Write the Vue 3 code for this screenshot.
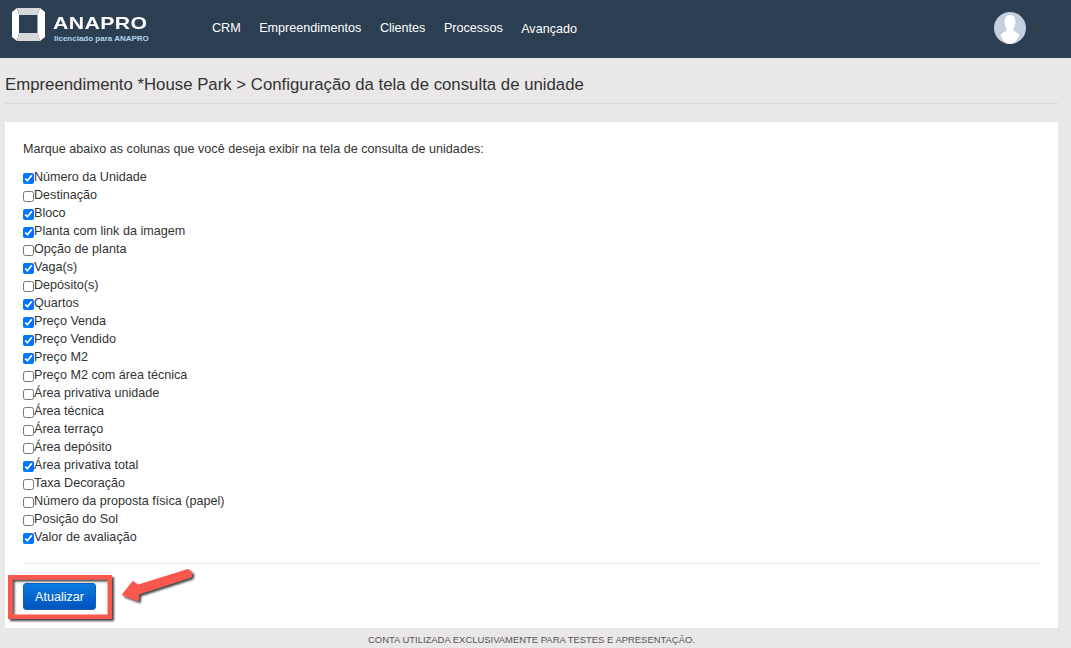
<script setup>
const menu = ['CRM', 'Empreendimentos', 'Clientes', 'Processos', 'Avançado']

const columns = [
  { label: 'Número da Unidade', checked: true },
  { label: 'Destinação', checked: false },
  { label: 'Bloco', checked: true },
  { label: 'Planta com link da imagem', checked: true },
  { label: 'Opção de planta', checked: false },
  { label: 'Vaga(s)', checked: true },
  { label: 'Depósito(s)', checked: false },
  { label: 'Quartos', checked: true },
  { label: 'Preço Venda', checked: true },
  { label: 'Preço Vendido', checked: true },
  { label: 'Preço M2', checked: true },
  { label: 'Preço M2 com área técnica', checked: false },
  { label: 'Área privativa unidade', checked: false },
  { label: 'Área técnica', checked: false },
  { label: 'Área terraço', checked: false },
  { label: 'Área depósito', checked: false },
  { label: 'Área privativa total', checked: true },
  { label: 'Taxa Decoração', checked: false },
  { label: 'Número da proposta física (papel)', checked: false },
  { label: 'Posição do Sol', checked: false },
  { label: 'Valor de avaliação', checked: true }
]
</script>

<template>
  <div class="page">
    <header class="topbar">
      <div class="brand">
        <svg class="brand-mark" width="34" height="34" viewBox="0 0 34 34">
          <path d="M5 0 7 7V25L5 33 0 29V4Z" fill="#fff" />
          <path d="M28 0 33 4V29L28 33 25.500 25V7Z" fill="#fff" />
          <path d="M5 0H28L25.500 7H7Z" fill="#d8d8d8" />
          <path d="M7 25H25.500L28 33H5Z" fill="#d8d8d8" />
        </svg>
        <div class="brand-text">
          <span class="brand-name">ANAPRO</span>
          <span class="brand-sub">licenciado para ANAPRO</span>
        </div>
      </div>
      <nav class="menu">
        <a v-for="item in menu" :key="item" class="menu-item">{{ item }}</a>
      </nav>
      <div class="user">
        <svg class="avatar" width="32" height="32" viewBox="0 0 32 32">
          <circle cx="16" cy="16" r="16" fill="#c5cfe0" />
          <path d="M16 3c3.600 0 5.400 2.800 5.400 6.400 0 3-.8 5.600-2 7.400-.6 1 0 2 1.400 2.800 2 1 3.600 2 4.600 3.600C23 28.800 19.800 32 16 32s-7-3.200-9.400-8.800c1-1.600 2.600-2.600 4.600-3.600 1.400-.8 2-1.800 1.400-2.800-1.200-1.800-2-4.400-2-7.400C10.600 5.800 12.400 3 16 3Z" fill="#fff" />
        </svg>
        <svg class="caret" width="12" height="8" viewBox="0 0 12 8">
          <path d="M1.500 1.500 6 6l4.500-4.500" fill="none" stroke="#3a3f45" stroke-width="3" />
        </svg>
      </div>
    </header>

    <main class="content">
      <h1 class="crumb">Empreendimento *House Park &gt; Configuração da tela de consulta de unidade</h1>
      <section class="card">
        <p class="intro">Marque abaixo as colunas que você deseja exibir na tela de consulta de unidades:</p>
        <label v-for="col in columns" :key="col.label" class="row">
          <input type="checkbox" :checked="col.checked" />{{ col.label }}
        </label>
        <div class="actions">
          <button type="button" class="btn-update">Atualizar</button>
          <svg class="callout" width="200" height="70" viewBox="0 0 200 70">
            <defs>
              <filter id="soft" x="-10%" y="-20%" width="125%" height="145%">
                <feDropShadow dx="2" dy="2" stdDeviation="1" flood-color="#000" flood-opacity="0.75" />
              </filter>
            </defs>
            <rect x="5.250" y="17.250" width="99.500" height="39.500" fill="none" stroke="#f9584f" stroke-width="4.500" filter="url(#soft)" />
            <path d="M118 34.500 128 22 132 26 183 10 186.500 13 185.500 16.500 133 33.500 133 40Z" fill="#f9584f" stroke="#f9584f" stroke-width="2" stroke-linejoin="round" filter="url(#soft)" />
          </svg>
        </div>
      </section>
      <footer class="notice">CONTA UTILIZADA EXCLUSIVAMENTE PARA TESTES E APRESENTAÇÃO.</footer>
    </main>
  </div>
</template>

<style>
html,
body {
  margin: 0;
  background: #e9e7e8;
}
</style>

<style scoped>
.page {
  font-family: "Liberation Sans", Arial, sans-serif;
  color: #333;
  height: 648px;
  overflow: hidden;
}

.topbar {
  height: 58px;
  background: #2c3e52;
  display: flex;
  align-items: flex-start;
}

.brand {
  display: flex;
  width: 212px;
  padding: 8px 0 0 12px;
  box-sizing: border-box;
  gap: 7px;
}

.brand-text {
  display: flex;
  flex-direction: column;
  padding-top: 6px;
}

.brand-name {
  color: #fff;
  font-size: 17px;
  line-height: 19px;
  font-weight: 700;
  letter-spacing: 0.300px;
  transform: scaleX(1.250);
  transform-origin: left center;
}

.brand-sub {
  color: #b4d4ec;
  font-size: 8px;
  line-height: 10px;
  font-weight: 700;
  margin: 1px 0 0 1px;
}

.menu {
  display: flex;
  gap: 18.500px;
  padding-top: 19px;
}

.menu-item {
  color: #fff;
  font-size: 12.600px;
  line-height: 18px;
}

.menu-item:last-child {
  margin-top: 1px;
}

.user {
  margin-left: auto;
  display: flex;
  align-items: center;
  gap: 4px;
  padding: 12px 29px 0 0;
}

.content {
  padding: 0 13px 0 5px;
}

.crumb {
  margin: 0 0 18px;
  padding: 17px 0 9px;
  font-size: 16.800px;
  line-height: 19px;
  font-weight: 400;
  border-bottom: 1px solid #d8d8d8;
}

.card {
  background: #fff;
  height: 506px;
  box-sizing: border-box;
  padding: 19px 18px 0;
  font-size: 12.600px;
}

.intro {
  margin: 0 0 10px;
  line-height: 17px;
}

.row {
  display: flex;
  align-items: center;
  height: 18px;
}

.row input {
  width: 11px;
  height: 11px;
  margin: 3px 0 0 0;
  accent-color: #0075ff;
}

.actions {
  position: relative;
  margin-top: 17px;
  padding-top: 19px;
  border-top: 1px solid #e8e8e8;
}

.btn-update {
  display: block;
  width: 73px;
  height: 27px;
  padding: 0;
  border: 1px solid #0a62bd;
  border-radius: 3px;
  background: linear-gradient(#0b7be0, #0053bd);
  color: #fff;
  font: 12.600px "Liberation Sans", Arial, sans-serif;
}

.callout {
  position: absolute;
  left: -18px;
  top: -4px;
  pointer-events: none;
}

.notice {
  margin-top: 6px;
  text-align: center;
  font-size: 9.450px;
  line-height: 12px;
  color: #555;
}
</style>
